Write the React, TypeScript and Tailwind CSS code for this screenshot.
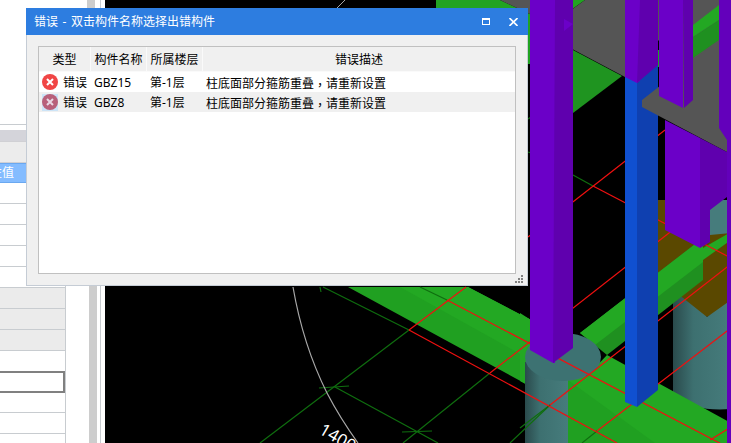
const FONT = { fontFamily: "'Noto Sans', 'Noto Sans CJK SC', sans-serif" };

const errors = [
  { type: "错误", name: "GBZ15", floor: "第-1层", before: "柱底面部分箍筋重叠", after: "请重新设置" },
  { type: "错误", name: "GBZ8", floor: "第-1层", before: "柱底面部分箍筋重叠", after: "请重新设置" },
];

function PanelRow({ tone, selected }: { tone?: boolean; selected?: boolean }) {
  if (selected) {
    return <div className="h-[22px] -mt-px -mb-px relative border-y-2 border-r-2 border-[#808080] bg-white" />;
  }
  return <div className={`h-[21px] border-b border-[#c8ccd0] ${tone ? "bg-[#ebebeb]" : "bg-white"}`} />;
}

function PropertyPanel() {
  return (
    <aside className="w-[66px] shrink-0 pt-[124px]">
      <div className="h-full border-r border-[#c8ccd0] overflow-hidden">
        <div className="h-[6px] border-t border-[#c8ccd0] bg-white" />
        <div className="h-[11px] bg-[#d4d4da]" />
        <div className="h-[22px] border-y border-[#d0d0d4] bg-[#ececec]" />
        <div className="h-[20px] flex justify-end items-center pr-[51px] bg-[#84bcff] border-y border-[#6aa8f0] text-white text-[12px] whitespace-nowrap">
          属性值
        </div>
        {[0, 1, 2, 3, 4].map((i) => (
          <PanelRow key={i} />
        ))}
        <PanelRow tone />
        <PanelRow tone />
        <PanelRow tone />
        <PanelRow />
        <PanelRow selected />
        <PanelRow />
        <PanelRow />
        <PanelRow />
      </div>
    </aside>
  );
}

// 3D model view, coordinates are page pixels (viewBox starts at x=105)
function ModelView() {
  return (
    <svg className="block w-[626px] h-[443px] shrink-0" viewBox="105 0 626 443">
      <defs>
        <linearGradient id="cyl" x1="0" x2="1" y1="0" y2="0">
          <stop offset="0" stopColor="#2a4a4c" />
          <stop offset="0.35" stopColor="#3d7070" />
          <stop offset="1" stopColor="#467c7c" />
        </linearGradient>
      </defs>
      <rect x="105" y="0" width="626" height="443" fill="#000" />

      {/* top green */}
      <polygon points="436,0 500,0 530,14 530,64 528,64 528,8 436,8" fill="#22a322" />
      <polygon points="500,0 530,0 530,14" fill="#555" />
      <polygon points="564,0 585,0 564,15" fill="#22a322" />
      <polygon points="573,50 622,76 573,113" fill="#1f9420" />

      {/* long beam under the dialog */}
      <polygon points="348,287 468,287 531,320 531,387 526,384" fill="#20a021" />
      <polygon points="400,287 468,287 531,320 531,360" fill="#23a823" />

      {/* brown block */}
      <polygon points="658,200 731,200 731,303 707,317 673,300 658,290" fill="#5a4800" />

      {/* right cylinder */}
      <path d="M673 290 L673 396 Q695 412 731 409 L731 300 L707 317 Z" fill="url(#cyl)" />
      <polygon points="710,200 731,200 731,233 710,235" fill="#467c7c" />

      {/* cross beam */}
      <polygon points="580,333 703,238 703,280 607,355" fill="#1f9020" />
      <polygon points="580,333 703,238 703,262 595,345" fill="#23a823" />
      <polygon points="703,248 731,232 731,240 703,260" fill="#23a823" />

      {/* floor beam */}
      <polygon points="520,313 531,320 531,387 520,381" fill="#23a823" />
      <polygon points="568,380 588,375 607,355 731,423 731,443 568,443" fill="#23a823" />
      <polygon points="568,380 655,443 568,443" fill="#20a021" />

      {/* left cylinder */}
      <rect x="525" y="362" width="43" height="81" fill="url(#cyl)" />
      <ellipse cx="563" cy="357" rx="38" ry="24" fill="#3d7272" />

      {/* grid lines */}
      <g fill="none" stroke="#0f6e0f" strokeWidth="1.2">
        <line x1="260" y1="443" x2="409" y2="330" />
        <line x1="323" y1="287" x2="409" y2="330" />
        <line x1="335" y1="387" x2="438" y2="443" />
        <line x1="403" y1="443" x2="490" y2="373" />
        <line x1="420" y1="287" x2="447" y2="300" />
        <line x1="319" y1="388" x2="349" y2="386" />
        <line x1="402" y1="432" x2="432" y2="431" />
        <line x1="320" y1="287" x2="321" y2="292" />
        <line x1="510" y1="443" x2="550" y2="405" />
        <line x1="520" y1="428" x2="550" y2="405" />
        <line x1="582" y1="443" x2="597" y2="431" />
        <line x1="573" y1="175" x2="593" y2="186" />
        <line x1="528" y1="119" x2="531" y2="117" />
        <line x1="528" y1="152" x2="531" y2="153" />
      </g>
      <g fill="none" stroke="#f01010" strokeWidth="1.2">
        <line x1="409" y1="330" x2="466" y2="287" />
        <line x1="409" y1="330" x2="617" y2="443" />
        <line x1="447" y1="300" x2="731" y2="449" />
        <line x1="490" y1="373" x2="683" y2="222" />
        <line x1="550" y1="405" x2="731" y2="264" />
        <line x1="597" y1="431" x2="731" y2="328" />
        <line x1="710" y1="440" x2="731" y2="427" />
        <line x1="528" y1="237" x2="665" y2="130" />
        <line x1="593" y1="186" x2="731" y2="258" />
      </g>
      <path d="M345 0 L337 8" stroke="#a8a8a8" fill="none" />
      <path d="M293 287 Q303 345 327 393 Q340 418 358 443" stroke="#a8a8a8" strokeWidth="1.2" fill="none" />
      <text x="318" y="433" transform="rotate(30 318 433)" fill="#fff" fontSize="17" style={FONT}>
        1400
      </text>

      {/* blue column */}
      <polygon points="625,50 637,50 637,407 625,402" fill="#1050d0" />
      <polygon points="637,50 658,50 658,390 637,407" fill="#0f40b0" />
      <rect x="658" y="50" width="1" height="17" fill="#22a322" />

      {/* slabs */}
      <polygon points="559,35 573,24 563,16 585,0 731,0 731,100 659,100 659,40 625,77 559,42" fill="#555" />
      <polygon points="642,100 693,60 719,40 731,60 731,160 727,152 642,107" fill="#555" />
      <polygon points="693,25 719,5 719,20 693,37" fill="#23a823" />
      <polygon points="693,37 719,20 719,40 693,58" fill="#1f9020" />

      {/* purple columns */}
      <polygon points="530,0 555,0 555,363 553,363 530,350" fill="#6b00c8" />
      <polygon points="555,0 573,0 573,348 553,363" fill="#5f00ae" />
      <polygon points="564,19 573,24 564,31" fill="#6b00c8" />
      <polygon points="625,0 640,0 640,81 637,83 625,77" fill="#6b00c8" />
      <polygon points="640,0 658,0 658,65 637,83" fill="#5f00ae" />
      <polygon points="659,0 683,0 683,108 659,96" fill="#6b00c8" />
      <polygon points="683,0 693,0 693,100 684,108" fill="#5f00ae" />
      <polygon points="665,120 700,138 700,248 665,230" fill="#6b00c8" />
      <polygon points="700,138 727,152 727,197 710,210 710,242 700,248" fill="#5f00ae" />
      <polygon points="719,0 731,0 731,443 727,443 727,140 719,128" fill="#6300bb" />
    </svg>
  );
}

function ErrorIcon({ selected }: { selected?: boolean }) {
  return (
    <div className={`w-[16px] h-[17px] flex items-center justify-center ${selected ? "bg-[#cce4f7]" : ""}`}>
      <svg width="16" height="16" viewBox="0 0 16 16">
        <circle cx="8" cy="8" r="8" fill={selected ? "#b8607a" : "#f04545"} />
        <path d="M5 5 L11 11 M11 5 L5 11" stroke={selected ? "#e8d8e4" : "#fff"} strokeWidth="2" />
      </svg>
    </div>
  );
}

function ErrorDialog() {
  return (
    <div className="absolute left-[26px] top-[8px] w-[502px] h-[278px] flex flex-col border-x border-b border-[#c5ccd5] bg-[#f0f0f0]">
      <div className="h-[27px] -mx-px flex items-center bg-[#2d7de0] text-white text-[12px]">
        <span className="ml-[8px] flex-1 [word-spacing:1.5px]">错误 - 双击构件名称选择出错构件</span>
        <svg width="9" height="8" viewBox="0 0 9 8" className="mr-[18px]">
          <path d="M0 0H8V7H0Z M1 2V6H7V2Z" fill="#fff" fillRule="evenodd" />
        </svg>
        <svg width="9" height="8" viewBox="0 0 9 8" className="mr-[10px]">
          <path d="M0.5 0 L8.5 8 M8.5 0 L0.5 8" stroke="#fff" strokeWidth="1.6" />
        </svg>
      </div>
      <div className="flex-1 flex flex-col mt-[11px] mx-[11px] mb-[11px] border border-[#c0c0c0] bg-white text-[12px] text-black">
        <div className="h-[25px] flex bg-[#f0f0f0] border-b border-[#fafafa] text-center">
          <div className="w-[52px] leading-[26px] border-r border-[#fafafa]">类型</div>
          <div className="w-[56px] leading-[26px] border-r border-[#fafafa]">构件名称</div>
          <div className="w-[56px] leading-[26px] border-r border-[#fafafa]">所属楼层</div>
          <div className="flex-1 leading-[26px]">错误描述</div>
        </div>
        {errors.map((e, i) => (
          <div key={e.name} className={`h-[20px] flex items-center ${i === 1 ? "bg-[#f0f0f0]" : "bg-white"}`}>
            <div className="w-[52px] flex items-center pl-[3px]">
              <ErrorIcon selected={i === 1} />
              <span className="ml-[5px] pt-[2px] leading-[18px]">{e.type}</span>
            </div>
            <div className="w-[56px] pl-[3px] pt-[2px] leading-[18px]">{e.name}</div>
            <div className="w-[56px] pl-[3px] pt-[2px] leading-[18px]">{e.floor}</div>
            <div className="pl-[3px] pt-[2px] leading-[18px]">
              {e.before}
              <span className="font-['Noto_Sans_CJK_TC'] inline-block translate-y-[2px]">，</span>
              {e.after}
            </div>
          </div>
        ))}
      </div>
      <svg width="9" height="8" viewBox="0 0 9 8" className="absolute right-[3px] bottom-[2px]" fill="#808080">
        <rect x="6" y="0" width="2" height="2" />
        <rect x="3" y="3" width="2" height="2" />
        <rect x="6" y="3" width="2" height="2" />
        <rect x="0" y="6" width="2" height="2" />
        <rect x="3" y="6" width="2" height="2" />
        <rect x="6" y="6" width="2" height="2" />
      </svg>
    </div>
  );
}

export default function App() {
  return (
    <div className="relative w-[731px] h-[443px] overflow-hidden flex bg-white" style={FONT}>
      <PropertyPanel />
      <div className="w-[23px] shrink-0" />
      <div className="w-[8px] shrink-0 flex flex-col">
        <div className="h-[8px] w-[8px] -ml-[2px] bg-[#cdcdcd]" />
        <div className="flex-1 bg-[#cdcdcd]" />
      </div>
      <div className="w-[3px] shrink-0" />
      <div className="w-[5px] shrink-0 border-l border-[#c8ccd0]" />
      <ModelView />
      <ErrorDialog />
    </div>
  );
}
